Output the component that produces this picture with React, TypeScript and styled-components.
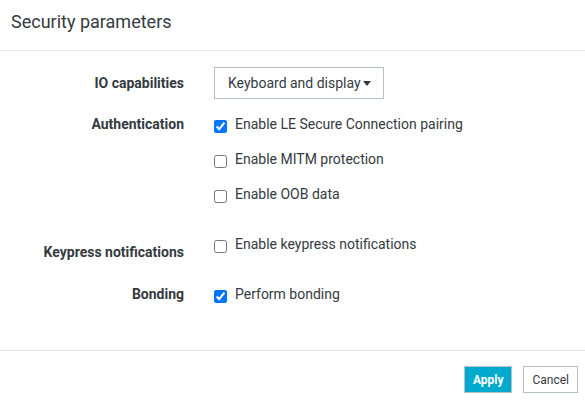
import React from "react";
import styled, { createGlobalStyle } from "styled-components";

const Global = createGlobalStyle`
  html, body { margin: 0; padding: 0; background: #fff; }
  body { font-family: Roboto, "Noto Sans", sans-serif; color: #343a40; }
  * { box-sizing: border-box; }
`;

const Dialog = styled.div`
  width: 585px;
  height: 401px;
  display: flex;
  flex-direction: column;
  background: #fff;
`;

const Header = styled.div`
  height: 51px;
  padding: 11px 11px 0;
  border-bottom: 1px solid #e3e6e8;
`;

const Title = styled.h1`
  margin: 0;
  font-size: 18px;
  font-weight: 400;
  line-height: 22px;
  color: #343a40;
`;

const Body = styled.div`
  flex: 1;
  padding-top: 16px;
  display: flex;
  flex-direction: column;
`;

const Row = styled.div<{ $mt?: number; $center?: boolean }>`
  display: grid;
  grid-template-columns: 184px 1fr;
  column-gap: 30px;
  align-items: ${(p) => (p.$center ? "center" : "start")};
  margin-top: ${(p) => p.$mt ?? 0}px;
`;

const Label = styled.div<{ $pt?: number }>`
  text-align: right;
  font-weight: 700;
  font-size: 14px;
  line-height: 21px;
  padding-top: ${(p) => p.$pt ?? 0}px;
  color: #343a40;
`;

const Select = styled.button`
  width: 170px;
  height: 32px;
  border: 1px solid #b4c0c7;
  background: #fff;
  border-radius: 0;
  padding: 0 0 0 13px;
  display: flex;
  align-items: center;
  gap: 2px;
  font-family: Roboto, sans-serif;
  font-size: 14px;
  color: #343a40;
  cursor: pointer;
`;

const Caret = styled.span`
  display: inline-block;
  width: 0;
  height: 0;
  border-left: 4.5px solid transparent;
  border-right: 4.5px solid transparent;
  border-top: 5px solid #343a40;
  margin-top: 1px;
`;

const Checks = styled.div`
  display: flex;
  flex-direction: column;
  gap: 14px;
`;

const Check = styled.label`
  display: flex;
  align-items: center;
  height: 21px;
  font-size: 14px;
  line-height: 21px;
  color: #343a40;
  input {
    width: 13px;
    height: 13px;
    margin: 3px 8px 0 0;
  }
`;

const Footer = styled.div`
  height: 51px;
  border-top: 1px solid #e3e6e8;
  padding: 15px 7px 0 0;
  display: flex;
  justify-content: flex-end;
  align-items: flex-start;
  gap: 11px;
`;

const Button = styled.button<{ $primary?: boolean }>`
  height: 27px;
  padding: 0 8px;
  font-family: Roboto, sans-serif;
  font-size: 12px;
  font-weight: ${(p) => (p.$primary ? 700 : 400)};
  color: ${(p) => (p.$primary ? "#fff" : "#343a40")};
  background: ${(p) => (p.$primary ? "#00a9ce" : "#fff")};
  border: 1px solid #b4c0c7;
  border-radius: 0;
  cursor: pointer;
`;

export default function App() {
  return (
    <Dialog>
      <Global />
      <Header>
        <Title>Security parameters</Title>
      </Header>
      <Body>
        <Row $center>
          <Label>IO capabilities</Label>
          <div>
            <Select>
              Keyboard and display
              <Caret />
            </Select>
          </div>
        </Row>
        <Row $mt={15}>
          <Label>Authentication</Label>
          <Checks>
            <Check>
              <input type="checkbox" defaultChecked />
              Enable LE Secure Connection pairing
            </Check>
            <Check>
              <input type="checkbox" />
              Enable MITM protection
            </Check>
            <Check>
              <input type="checkbox" />
              Enable OOB data
            </Check>
          </Checks>
        </Row>
        <Row $mt={29}>
          <Label $pt={8}>Keypress notifications</Label>
          <Checks>
            <Check>
              <input type="checkbox" />
              Enable keypress notifications
            </Check>
          </Checks>
        </Row>
        <Row $mt={21}>
          <Label>Bonding</Label>
          <Checks>
            <Check>
              <input type="checkbox" defaultChecked />
              Perform bonding
            </Check>
          </Checks>
        </Row>
      </Body>
      <Footer>
        <Button $primary>Apply</Button>
        <Button>Cancel</Button>
      </Footer>
    </Dialog>
  );
}
